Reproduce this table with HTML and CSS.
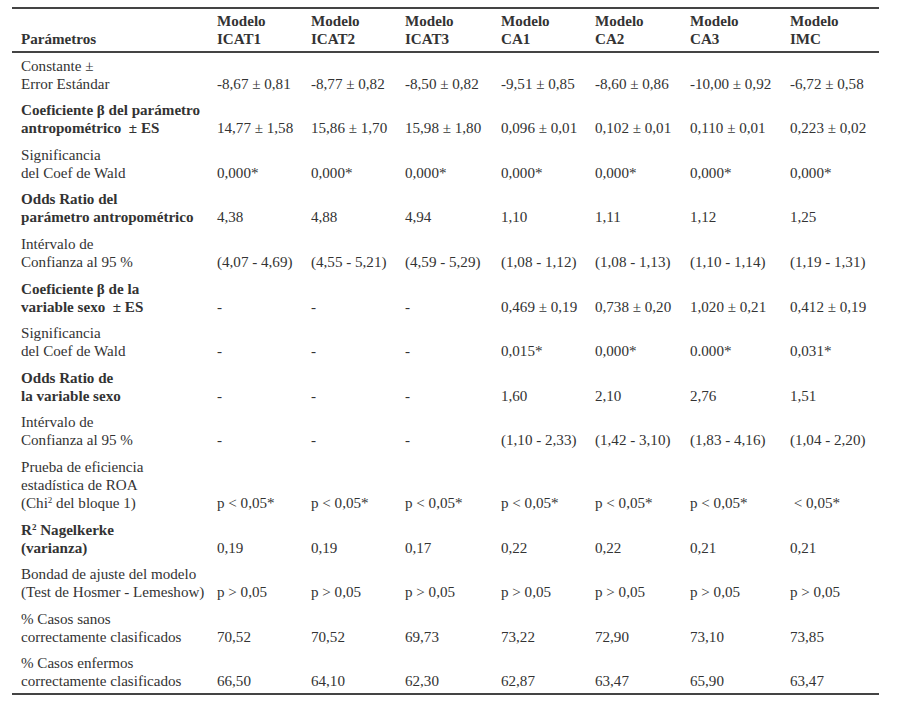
FILE: index.html
```html
<!DOCTYPE html>
<html lang="es">
<head>
<meta charset="utf-8">
<title>Modelos</title>
<link rel="stylesheet" href="styles.css">
</head>
<body>
<table class="stats">
  <colgroup>
    <col class="c-label">
    <col class="c-94">
    <col class="c-94">
    <col class="c-96">
    <col class="c-94">
    <col class="c-95">
    <col class="c-100">
    <col class="c-98">
  </colgroup>
  <thead>
    <tr>
      <th>Parámetros</th>
      <th>Modelo<br>ICAT1</th>
      <th>Modelo<br>ICAT2</th>
      <th>Modelo<br>ICAT3</th>
      <th>Modelo<br>CA1</th>
      <th>Modelo<br>CA2</th>
      <th>Modelo<br>CA3</th>
      <th>Modelo<br>IMC</th>
    </tr>
  </thead>
  <tbody>
    <tr>
      <td class="label">Constante ±<br>Error Estándar</td>
      <td>-8,67 ± 0,81</td><td>-8,77 ± 0,82</td><td>-8,50 ± 0,82</td><td>-9,51 ± 0,85</td><td>-8,60 ± 0,86</td><td>-10,00 ± 0,92</td><td>-6,72 ± 0,58</td>
    </tr>
    <tr>
      <td class="label strong">Coeficiente β del parámetro<br>antropométrico&nbsp; ± ES</td>
      <td>14,77 ± 1,58</td><td>15,86 ± 1,70</td><td>15,98 ± 1,80</td><td>0,096 ± 0,01</td><td>0,102 ± 0,01</td><td>0,110 ± 0,01</td><td>0,223 ± 0,02</td>
    </tr>
    <tr>
      <td class="label">Significancia<br>del Coef de Wald</td>
      <td>0,000*</td><td>0,000*</td><td>0,000*</td><td>0,000*</td><td>0,000*</td><td>0,000*</td><td>0,000*</td>
    </tr>
    <tr>
      <td class="label strong">Odds Ratio del<br>parámetro antropométrico</td>
      <td>4,38</td><td>4,88</td><td>4,94</td><td>1,10</td><td>1,11</td><td>1,12</td><td>1,25</td>
    </tr>
    <tr>
      <td class="label">Intérvalo de<br>Confianza al 95 %</td>
      <td>(4,07 - 4,69)</td><td>(4,55 - 5,21)</td><td>(4,59 - 5,29)</td><td>(1,08 - 1,12)</td><td>(1,08 - 1,13)</td><td>(1,10 - 1,14)</td><td>(1,19 - 1,31)</td>
    </tr>
    <tr>
      <td class="label strong">Coeficiente β de la<br>variable sexo&nbsp; ± ES</td>
      <td>-</td><td>-</td><td>-</td><td>0,469 ± 0,19</td><td>0,738 ± 0,20</td><td>1,020 ± 0,21</td><td>0,412 ± 0,19</td>
    </tr>
    <tr>
      <td class="label">Significancia<br>del Coef de Wald</td>
      <td>-</td><td>-</td><td>-</td><td>0,015*</td><td>0,000*</td><td>0.000*</td><td>0,031*</td>
    </tr>
    <tr>
      <td class="label strong">Odds Ratio de<br>la variable sexo</td>
      <td>-</td><td>-</td><td>-</td><td>1,60</td><td>2,10</td><td>2,76</td><td>1,51</td>
    </tr>
    <tr>
      <td class="label">Intérvalo de<br>Confianza al 95 %</td>
      <td>-</td><td>-</td><td>-</td><td>(1,10 - 2,33)</td><td>(1,42 - 3,10)</td><td>(1,83 - 4,16)</td><td>(1,04 - 2,20)</td>
    </tr>
    <tr>
      <td class="label">Prueba de eficiencia<br>estadística de ROA<br>(Chi<sup>2</sup> del bloque 1)</td>
      <td>p &lt; 0,05*</td><td>p &lt; 0,05*</td><td>p &lt; 0,05*</td><td>p &lt; 0,05*</td><td>p &lt; 0,05*</td><td>p &lt; 0,05*</td><td>&nbsp;&lt; 0,05*</td>
    </tr>
    <tr>
      <td class="label strong">R<sup>2</sup> Nagelkerke<br>(varianza)</td>
      <td>0,19</td><td>0,19</td><td>0,17</td><td>0,22</td><td>0,22</td><td>0,21</td><td>0,21</td>
    </tr>
    <tr>
      <td class="label">Bondad de ajuste del modelo<br>(Test de Hosmer - Lemeshow)</td>
      <td>p &gt; 0,05</td><td>p &gt; 0,05</td><td>p &gt; 0,05</td><td>p &gt; 0,05</td><td>p &gt; 0,05</td><td>p &gt; 0,05</td><td>p &gt; 0,05</td>
    </tr>
    <tr>
      <td class="label">% Casos sanos<br>correctamente clasificados</td>
      <td>70,52</td><td>70,52</td><td>69,73</td><td>73,22</td><td>72,90</td><td>73,10</td><td>73,85</td>
    </tr>
    <tr>
      <td class="label">% Casos enfermos<br>correctamente clasificados</td>
      <td>66,50</td><td>64,10</td><td>62,30</td><td>62,87</td><td>63,47</td><td>65,90</td><td>63,47</td>
    </tr>
  </tbody>
</table>
</body>
</html>
```
FILE: styles.css
```css
html, body {
  margin: 0;
  padding: 0;
  background: #ffffff;
}

body {
  padding: 7px 12px 0;
  font-family: "Liberation Serif", "Times New Roman", serif;
  font-size: 15.1px;
  line-height: 18px;
  color: #333333;
}

.stats {
  width: 867px;
  table-layout: fixed;
  border-collapse: collapse;
  border-top: 2px solid #444444;
  border-bottom: 2px solid #444444;
}

.c-label { width: 196px; }
.c-94 { width: 94px; }
.c-95 { width: 95px; }
.c-96 { width: 96px; }
.c-98 { width: 98px; }
.c-100 { width: 100px; }

.stats th {
  text-align: left;
  vertical-align: bottom;
  font-weight: bold;
  padding: 3px 9px 3px;
  border-bottom: 2px solid #444444;
  white-space: nowrap;
}

.stats td {
  text-align: left;
  vertical-align: bottom;
  padding: 3.6px 9px 5px;
  white-space: nowrap;
}

.stats tbody tr:last-child td {
  padding-bottom: 3px;
}

.label.strong {
  font-weight: bold;
}

sup {
  font-size: 9px;
  line-height: 0;
  vertical-align: 5px;
}
```
